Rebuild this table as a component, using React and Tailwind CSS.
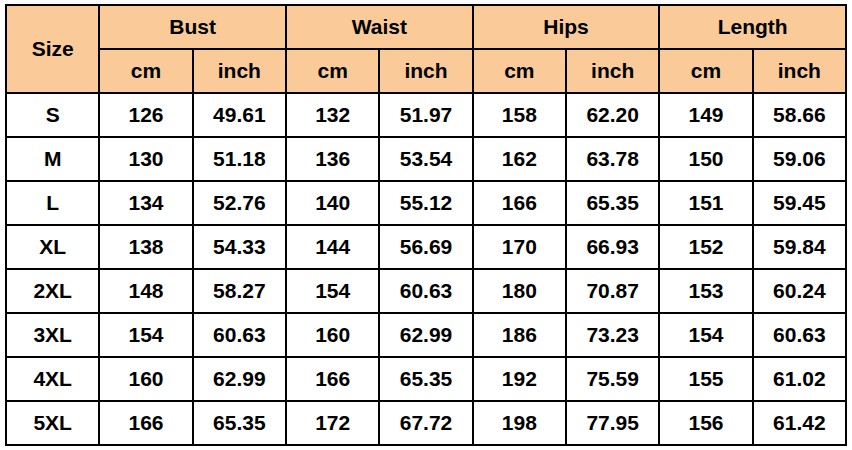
import React from "react";

const rows = [
  ["S", "126", "49.61", "132", "51.97", "158", "62.20", "149", "58.66"],
  ["M", "130", "51.18", "136", "53.54", "162", "63.78", "150", "59.06"],
  ["L", "134", "52.76", "140", "55.12", "166", "65.35", "151", "59.45"],
  ["XL", "138", "54.33", "144", "56.69", "170", "66.93", "152", "59.84"],
  ["2XL", "148", "58.27", "154", "60.63", "180", "70.87", "153", "60.24"],
  ["3XL", "154", "60.63", "160", "62.99", "186", "73.23", "154", "60.63"],
  ["4XL", "160", "62.99", "166", "65.35", "192", "75.59", "155", "61.02"],
  ["5XL", "166", "65.35", "172", "67.72", "198", "77.95", "156", "61.42"],
];

const groups = ["Bust", "Waist", "Hips", "Length"];

export default function App() {
  const head = "bg-[#FACA99] flex items-center justify-center pb-[2px]";
  const cell = "bg-white flex items-center justify-center pb-[2px]";
  return (
    <div className="w-[852px] h-[450px] bg-white pt-[4px] pl-[5px]">
      <div
        className="w-[842px] h-[442px] bg-black p-[2px] grid gap-[2px] grid-cols-[repeat(9,1fr)] grid-rows-[repeat(10,1fr)] text-[21px] font-bold text-black leading-none"
        style={{ fontFamily: '"Liberation Sans", Arial, sans-serif' }}
      >
        <div className={`${head} row-span-2`}>Size</div>
        {groups.map((g) => (
          <div key={g} className={`${head} col-span-2`}>
            {g}
          </div>
        ))}
        {groups.map((g) => (
          <React.Fragment key={g + "u"}>
            <div className={head}>cm</div>
            <div className={head}>inch</div>
          </React.Fragment>
        ))}
        {rows.map((r) =>
          r.map((v, i) => (
            <div key={r[0] + i} className={cell}>
              {v}
            </div>
          ))
        )}
      </div>
    </div>
  );
}
